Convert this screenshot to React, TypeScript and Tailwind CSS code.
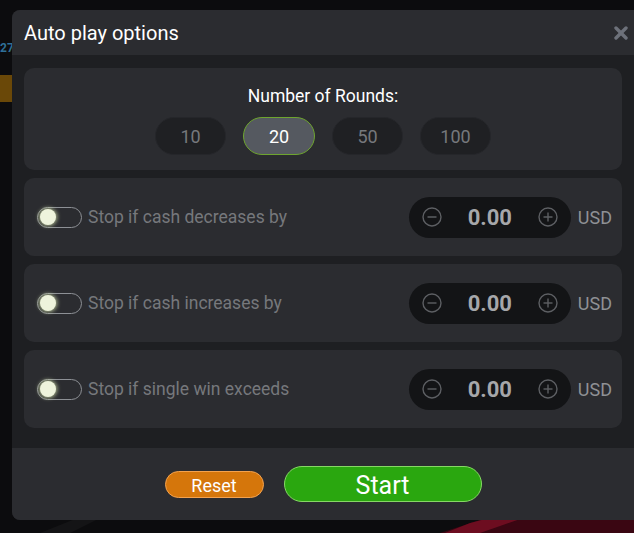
import React, { useState } from 'react';

const rounds = [10, 20, 50, 100];

const stops = [
  'Stop if cash decreases by',
  'Stop if cash increases by',
  'Stop if single win exceeds',
];

function Toggle() {
  return (
    <div className="w-[45px] h-[21px] rounded-full border border-[#8d9095] flex items-center px-[2px] shrink-0">
      <div className="w-[16px] h-[16px] rounded-full bg-[#eef3dc] shadow-[0_0_4px_1px_rgba(220,235,180,0.8)]"></div>
    </div>
  );
}

function CircleIcon({ plus }: { plus?: boolean }) {
  return (
    <svg width="20" height="20" viewBox="0 0 20 20" fill="none" stroke="#5d5f63" strokeWidth="1.4">
      <circle cx="10" cy="10" r="9" />
      <line x1="5.5" y1="10" x2="14.5" y2="10" />
      {plus && <line x1="10" y1="5.5" x2="10" y2="14.5" />}
    </svg>
  );
}

function StopRow({ label }: { label: string }) {
  return (
    <div className="h-[78px] rounded-[10px] bg-[#2b2c30] flex items-center pl-[13px] pr-[10px]">
      <Toggle />
      <span className="ml-[6px] text-[17.5px] text-[#76787c]">{label}</span>
      <div className="ml-auto flex items-center">
        <div className="w-[162px] h-[41px] rounded-full bg-[#131416] flex items-center justify-between px-[13px]">
          <CircleIcon />
          <span className="text-[22px] font-bold text-[#a6a7aa]">0.00</span>
          <CircleIcon plus />
        </div>
        <span className="ml-[7px] text-[18px] text-[#8f9195]">USD</span>
      </div>
    </div>
  );
}

export default function App() {
  const [selected, setSelected] = useState(20);

  return (
    <div className="relative w-[634px] h-[533px] overflow-hidden bg-[#0c0c0e] font-['Roboto',sans-serif]">
      {/* background game bits peeking out */}
      <span className="absolute left-0 top-[39px] text-[12px] font-bold text-[#2f6f97]">27</span>
      <div className="absolute left-0 top-[75px] w-[12px] h-[27px] bg-[#6a4808]"></div>
      <svg className="absolute left-0 bottom-0" width="634" height="40" viewBox="0 0 634 40">
        <polygon points="440,40 520,14 634,0 634,40" fill="#3a0612" />
        <polygon points="445,40 470,30 540,12 560,12 480,40" fill="#7a0f24" opacity="0.8" />
        <polygon points="40,40 90,20 110,20 70,40" fill="#141416" />
      </svg>

      {/* modal */}
      <div className="relative ml-[12px] mt-[10px] w-[630px] rounded-[8px] overflow-hidden bg-[#1e1f22]">
        <div className="h-[45px] bg-[#2b2c30] flex items-center pl-[12px] pr-[16px]">
          <h1 className="text-[20px] text-white">Auto play options</h1>
          <svg className="ml-auto mr-[-2px]" width="14" height="14" viewBox="0 0 14 14" stroke="#6d717a" strokeWidth="3.4" strokeLinecap="round">
            <line x1="2" y1="2" x2="12" y2="12" />
            <line x1="12" y1="2" x2="2" y2="12" />
          </svg>
        </div>

        <div className="pt-[13px] pb-[20px] pl-[12px] pr-[20px] flex flex-col gap-[8px]">
          <div className="h-[102px] rounded-[10px] bg-[#2b2c30] flex flex-col items-center pt-[17px]">
            <span className="text-[17.5px] text-white leading-[22px]">Number of Rounds:</span>
            <div className="flex gap-[17px] mt-[10px]">
              {rounds.map((r) => (
                <button
                  key={r}
                  onClick={() => setSelected(r)}
                  className={
                    r === selected
                      ? 'w-[72px] h-[38px] rounded-full bg-[#555960] border border-[#6ea52f] text-white text-[18px]'
                      : 'w-[71px] h-[38px] rounded-full bg-[#1f2023] border border-[#25262a] text-[#76787c] text-[18px]'
                  }
                >
                  {r}
                </button>
              ))}
            </div>
          </div>

          {stops.map((s) => (
            <StopRow key={s} label={s} />
          ))}
        </div>

        <div className="h-[72px] bg-[#2b2c30] flex items-center justify-center gap-[20px] pr-[8px]">
          <button className="w-[99px] h-[27px] rounded-full bg-[#d5760b] border border-[#f3a24f] text-white text-[18px]">
            Reset
          </button>
          <button className="w-[198px] h-[36px] rounded-full bg-[#2aa70f] border border-[#86d865] text-white text-[25px]">
            Start
          </button>
        </div>
      </div>
    </div>
  );
}
